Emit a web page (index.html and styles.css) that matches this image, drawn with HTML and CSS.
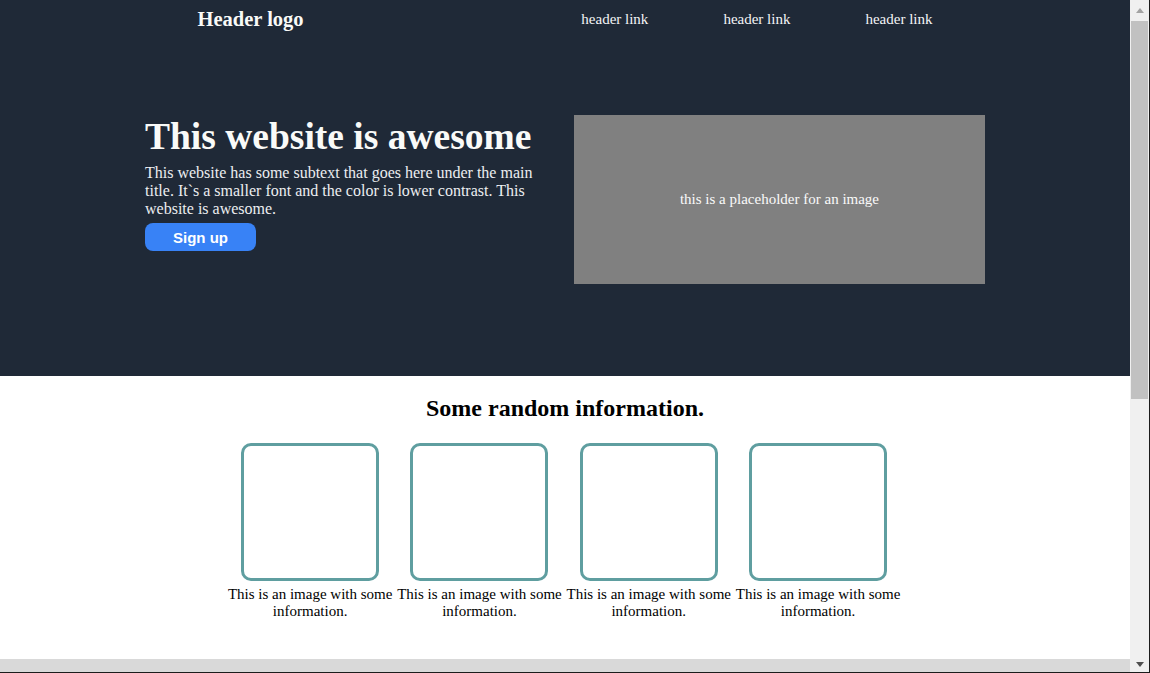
FILE: index.html
```html
<!DOCTYPE html>
<html lang="en">
<head>
<meta charset="utf-8">
<title>This website is awesome</title>
<link rel="stylesheet" href="styles.css">
</head>
<body>
<div class="window">
  <div class="viewport">
    <div class="page">
      <div class="dark">
        <header class="header">
          <div class="logo">Header logo</div>
          <nav class="links">
            <a class="link" href="#">header link</a>
            <a class="link" href="#">header link</a>
            <a class="link" href="#">header link</a>
          </nav>
        </header>
        <section class="hero">
          <div class="hero-text">
            <h1 class="title">This website is awesome</h1>
            <p class="subtext">This website has some subtext that goes here under the main title. It`s a smaller font and the color is lower contrast. This website is awesome.</p>
            <button class="signup">Sign up</button>
          </div>
          <div class="placeholder">this is a placeholder for an image</div>
        </section>
      </div>
      <section class="info">
        <h2 class="info-title">Some random information.</h2>
        <div class="cards">
          <div class="card"><div class="card-img"></div><p class="card-text">This is an image with some information.</p></div>
          <div class="card"><div class="card-img"></div><p class="card-text">This is an image with some information.</p></div>
          <div class="card"><div class="card-img"></div><p class="card-text">This is an image with some information.</p></div>
          <div class="card"><div class="card-img"></div><p class="card-text">This is an image with some information.</p></div>
        </div>
      </section>
      <div class="next"></div>
    </div>
    <div class="scrollbar">
      <div class="sb-btn"><span class="arrow-up"></span></div>
      <div class="sb-thumb"></div>
      <div class="sb-fill"></div>
      <div class="sb-btn"><span class="arrow-down"></span></div>
    </div>
  </div>
</div>
</body>
</html>
```

FILE: styles.css
```css
html, body {
  margin: 0;
  padding: 0;
  height: 673px;
  overflow: hidden;
}

body {
  font-family: "Liberation Serif", "Times New Roman", serif;
  font-size: 15px;
  color: #000;
}

.window {
  width: 1150px;
  height: 673px;
  background: #1c1c1c;
}

.viewport {
  display: flex;
  height: 672px;
  width: 1149px;
}

.page {
  width: 1130px;
  display: flex;
  flex-direction: column;
  background: #fff;
}

.dark {
  background: #1f2937;
  height: 376px;
}

.header {
  width: 735px;
  height: 38px;
  margin: 0 auto;
  display: flex;
  align-items: center;
  justify-content: space-between;
}

.logo {
  color: #f9faf8;
  font-weight: bold;
  font-size: 20.5px;
}

.links {
  display: flex;
  gap: 75px;
}

.link {
  color: #f3f4f6;
  font-size: 15px;
  text-decoration: none;
}

.hero {
  width: 840px;
  margin: 0 auto;
  padding-top: 77px;
  display: flex;
  justify-content: space-between;
  align-items: flex-start;
}

.hero-text {
  width: 400px;
  display: flex;
  flex-direction: column;
  align-items: flex-start;
}

.title {
  margin: 0;
  font-size: 37.5px;
  font-weight: bold;
  color: #f9faf8;
}

.subtext {
  margin: 6px 0 0;
  font-size: 16px;
  color: #eceef1;
}

.signup {
  margin-top: 5px;
  width: 111px;
  height: 28px;
  border: none;
  border-radius: 8px;
  background: #3882f6;
  color: #fff;
  font-family: "Liberation Sans", Arial, sans-serif;
  font-weight: bold;
  font-size: 15px;
  padding: 0;
}

.placeholder {
  width: 411px;
  height: 169px;
  background: #808080;
  color: #fafafa;
  font-size: 15px;
  display: flex;
  align-items: center;
  justify-content: center;
}

.info {
  height: 283px;
  box-sizing: border-box;
  padding-top: 19px;
  background: #fff;
}

.info-title {
  margin: 0;
  text-align: center;
  font-size: 24px;
  font-weight: bold;
}

.cards {
  width: 677px;
  margin: 21px 0 0 225.5px;
  display: flex;
}

.card {
  width: 169.3px;
  flex: none;
  display: flex;
  flex-direction: column;
  align-items: center;
}

.card-img {
  width: 132px;
  height: 132px;
  border: 3px solid #5f9ea0;
  border-radius: 10px;
}

.card-text {
  margin: 5px 0 0;
  width: 170px;
  text-align: center;
  font-size: 15px;
}

.next {
  flex: 1;
  background: #d9d9d9;
}

.scrollbar {
  width: 19px;
  display: flex;
  flex-direction: column;
  background: #f0f0f0;
}

.sb-btn {
  height: 21px;
  display: flex;
  align-items: center;
  justify-content: center;
}

.sb-thumb {
  height: 378px;
  width: 17px;
  margin-left: 1px;
  background: #c1c1c1;
}

.sb-fill {
  flex: 1;
}

.arrow-up {
  width: 0;
  height: 0;
  border-left: 4.5px solid transparent;
  border-right: 4.5px solid transparent;
  border-bottom: 5px solid #a3a3a3;
}

.arrow-down {
  width: 0;
  height: 0;
  border-left: 4.5px solid transparent;
  border-right: 4.5px solid transparent;
  border-top: 5px solid #505050;
  margin-top: 6px;
}
```
